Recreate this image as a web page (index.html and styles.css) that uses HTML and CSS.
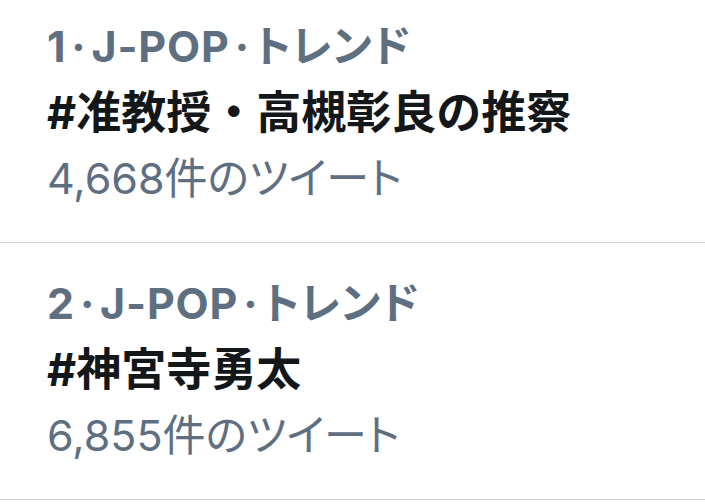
FILE: index.html
```html
<!DOCTYPE html>
<html lang="ja">
  <head>
    <meta charset="UTF-8" />
    <meta name="viewport" content="width=device-width, initial-scale=1.0" />
    <title>トレンド</title>
    <link rel="stylesheet" href="styles.css">
  </head>
  <body>
    <div class="trends">
      <div class="trend">
        <div class="trend-meta">1<span class="dot">·</span>J-POP<span class="dot">·</span>トレンド</div>
        <div class="trend-name">#准教授・高槻彰良の推察</div>
        <div class="trend-count">4,668件のツイート</div>
      </div>

      <div class="trend">
        <div class="trend-meta">2<span class="dot">·</span>J-POP<span class="dot">·</span>トレンド</div>
        <div class="trend-name">#神宮寺勇太</div>
        <div class="trend-count">6,855件のツイート</div>
      </div>
    </div>
  </body>
</html>
```

FILE: styles.css
```css
* {
  margin: 0;
  padding: 0;
  box-sizing: border-box;
}

body {
  font-family: "Inter", "Noto Sans CJK JP", sans-serif;
  background: #ffffff;
  overflow: hidden;
}

.trends {
  margin-top: -14px;
}

.trend {
  padding: 30px 20px 35px 47px;
  border-bottom: 1px solid #cfd2d4;
}

.trend-meta {
  color: #5f6f82;
  font-size: 43px;
  font-weight: 700;
  line-height: 60px;
  letter-spacing: 0.8px;
  font-feature-settings: "palt";
}

.trend-meta .dot {
  margin: 0 5px;
}

.trend-name {
  color: #14171a;
  font-size: 45px;
  font-weight: 700;
  line-height: 74px;
}

.trend-count {
  color: #5f6f82;
  font-size: 43px;
  font-weight: 400;
  line-height: 57px;
  font-feature-settings: "palt";
}
```
